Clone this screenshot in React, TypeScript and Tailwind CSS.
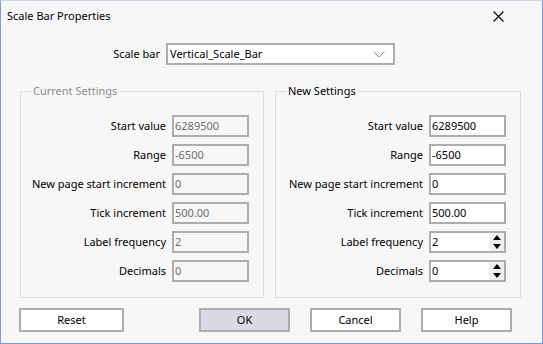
import React from 'react';

type Field = { label: string; value: string; spin?: boolean };

const fields: Field[] = [
  { label: 'Start value', value: '6289500' },
  { label: 'Range', value: '-6500' },
  { label: 'New page start increment', value: '0' },
  { label: 'Tick increment', value: '500.00' },
  { label: 'Label frequency', value: '2', spin: true },
  { label: 'Decimals', value: '0', spin: true },
];

const Spinner = () => (
  <div className="absolute right-0 top-0 bottom-0 w-[15px] bg-[#f0f0f0] flex flex-col items-center justify-center gap-[4px]">
    <svg width="8" height="5" viewBox="0 0 8 5">
      <path d="M0 5 L4 0 L8 5 Z" fill="#000" />
    </svg>
    <svg width="8" height="5" viewBox="0 0 8 5">
      <path d="M0 0 L4 5 L8 0 Z" fill="#000" />
    </svg>
  </div>
);

const Row: React.FC<{ field: Field; disabled?: boolean }> = ({ field, disabled }) => (
  <div className="flex items-center justify-end gap-[6px] h-[22px]">
    <span className="text-black whitespace-nowrap">{field.label}</span>
    <div
      className={`relative w-[77px] h-[22px] border-2 border-[#adadad] flex items-center pl-[1px] ${
        disabled ? 'bg-[#f7f7f7] text-[#6d6d6d]' : 'bg-white text-black'
      }`}
    >
      <span>{field.value}</span>
      {field.spin && !disabled && <Spinner />}
    </div>
  </div>
);

const Group: React.FC<{ title: string; disabled?: boolean; width: string }> = ({ title, disabled, width }) => (
  <fieldset className={`${width} h-[214px] border border-[#dcdcdc] pr-[14px] pt-[17px]`}>
    <legend className={`ml-[10px] px-[2px] leading-[14px] ${disabled ? 'text-[#8d8d8d]' : 'text-black'}`}>{title}</legend>
    <div className="flex flex-col gap-[7px]">
      {fields.map(f => (
        <Row key={f.label} field={f} disabled={disabled} />
      ))}
    </div>
  </fieldset>
);

const Button: React.FC<{ label: string; className: string; primary?: boolean }> = ({ label, className, primary }) => (
  <button
    className={`${className} h-[24px] border-2 border-[#adadad] text-black flex items-center justify-center ${
      primary ? 'bg-[#dad9e6]' : 'bg-[#fdfdfd]'
    }`}
  >
    {label}
  </button>
);

export default function App() {
  return (
    <div
      className="w-[543px] h-[344px] bg-[#f7f7f7] border border-[#7c9bd0] border-t-[#c9d6ec] text-[11px] flex flex-col"
      style={{ fontFamily: '"Segoe UI", "Noto Sans", sans-serif' }}
    >
      <div className="h-[31px] flex items-center justify-between pl-[6px] pr-[38px]">
        <span className="text-black">Scale Bar Properties</span>
        <svg width="11" height="11" viewBox="0 0 11 11">
          <path d="M0.5 0.5 L10.5 10.5 M10.5 0.5 L0.5 10.5" stroke="#000" strokeWidth="1.1" />
        </svg>
      </div>

      <div className="flex items-center mt-[11px] h-[22px]">
        <span className="w-[159px] text-right text-black">Scale bar</span>
        <div className="ml-[6px] w-[229px] h-[22px] border-2 border-[#adadad] bg-white flex items-center justify-between pl-[2px] pr-[8px]">
          <span className="text-black">Vertical_Scale_Bar</span>
          <svg width="12" height="7" viewBox="0 0 12 7">
            <path d="M0.5 0.5 L6 6 L11.5 0.5" stroke="#8a8a8a" strokeWidth="1" fill="none" />
          </svg>
        </div>
      </div>

      <div className="flex mt-[19px] pl-[19px] gap-[11px]">
        <Group title="Current Settings" disabled width="w-[244px]" />
        <Group title="New Settings" width="w-[246px]" />
      </div>

      <div className="flex mt-[10px] pl-[18px]">
        <Button label="Reset" className="w-[105px]" />
        <Button label="OK" className="w-[91px] ml-[75px]" primary />
        <Button label="Cancel" className="w-[91px] ml-[20px]" />
        <Button label="Help" className="w-[91px] ml-[20px]" />
      </div>
    </div>
  );
}
